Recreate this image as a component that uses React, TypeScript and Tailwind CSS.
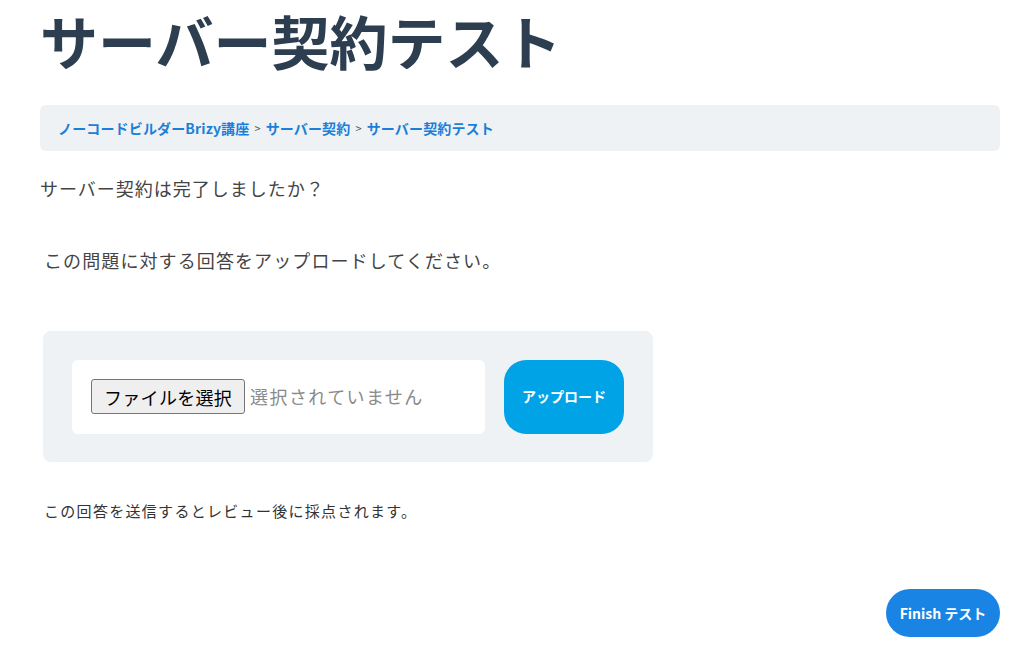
import React from 'react';

const crumbs = ['ノーコードビルダーBrizy講座', 'サーバー契約', 'サーバー契約テスト'];

export default function App() {
  return (
    <div
      className="w-[1024px] h-[672px] bg-white overflow-hidden"
      style={{ fontFamily: '"Noto Sans CJK JP", "Noto Sans", sans-serif' }}
    >
      <div className="pl-[40px] pr-[24px]">
        {/* Title */}
        <h1 className="pt-[2px] text-[58px] leading-[76px] font-bold text-[#2c3e50] whitespace-nowrap">
          サーバー契約テスト
        </h1>

        {/* Breadcrumb */}
        <div className="mt-[27px] h-[46px] rounded-md bg-[#eef2f5] flex items-center px-[18px] text-[14px] font-bold tracking-[0.15px]">
          {crumbs.map((c, i) => (
            <React.Fragment key={c}>
              {i > 0 && <span className="text-[#555] font-normal text-[11px] mx-[5px]">&gt;</span>}
              <a className="text-[#1b7fd9]">{c}</a>
            </React.Fragment>
          ))}
        </div>

        {/* Question */}
        <p className="mt-[24px] text-[18px] leading-[26px] text-[#444] tracking-[1px]">
          サーバー契約は完了しましたか？
        </p>

        <p className="mt-[46px] ml-[4px] text-[18px] leading-[26px] text-[#444] tracking-[1.1px]">
          この問題に対する回答をアップロードしてください。
        </p>

        {/* Upload box */}
        <div className="mt-[58px] ml-[3px] w-[610px] h-[131px] rounded-lg bg-[#eef2f5] flex items-center pl-[29px] pr-[29px] gap-[19px]">
          <div className="w-[413px] h-[74px] bg-white rounded-md flex items-center pl-[19px]">
            <button className="h-[35px] px-[12px] bg-[#efefef] border border-[#767676] rounded-[3px] text-[18px] text-black leading-none tracking-[0.3px]">
              ファイルを選択
            </button>
            <span className="ml-[5px] text-[18px] text-[#8a8a8a] tracking-[1.4px]">選択されていません</span>
          </div>
          <button className="w-[120px] h-[74px] rounded-[22px] bg-[#00a3e6] text-white text-[14px] font-bold">
            アップロード
          </button>
        </div>

        <p className="mt-[38px] ml-[4px] text-[15px] leading-[22px] text-[#333] tracking-[1.3px]">
          この回答を送信するとレビュー後に採点されます。
        </p>

        {/* Finish */}
        <div className="flex justify-end mt-[67px]">
          <button className="w-[114px] h-[48px] rounded-full bg-[#1a84e4] text-white text-[14px] font-bold">
            Finish テスト
          </button>
        </div>
      </div>
    </div>
  );
}
